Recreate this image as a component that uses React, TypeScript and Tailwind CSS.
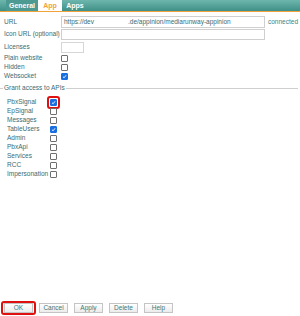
import React from 'react';

const font = { fontFamily: '"Liberation Sans", Arial, sans-serif' };

const Check: React.FC<{ checked?: boolean; marked?: boolean }> = ({ checked, marked }) => (
  <span className="relative inline-flex">
    <span
      className={
        checked
          ? 'w-[7px] h-[7px] rounded-[1px] bg-[#1a6fe0] border border-[#1a6fe0] flex items-center justify-center'
          : 'w-[7px] h-[7px] rounded-[1px] bg-white border border-[#6f6f6f]'
      }
    >
      {checked && (
        <svg width="5" height="5" viewBox="0 0 10 10">
          <path d="M2 5.5 L4.2 7.5 L8.2 2.5" stroke="white" strokeWidth="1.8" fill="none" />
        </svg>
      )}
    </span>
    {marked && <span className="absolute -inset-[3px] border-2 border-[#e01010] rounded-[3px]" />}
  </span>
);

const apis: { name: string; checked: boolean; marked?: boolean }[] = [
  { name: 'PbxSignal', checked: true, marked: true },
  { name: 'EpSignal', checked: false },
  { name: 'Messages', checked: false },
  { name: 'TableUsers', checked: true },
  { name: 'Admin', checked: false },
  { name: 'PbxApi', checked: false },
  { name: 'Services', checked: false },
  { name: 'RCC', checked: false },
  { name: 'Impersonation', checked: false },
];

const buttons = ['OK', 'Cancel', 'Apply', 'Delete', 'Help'];

export default function App() {
  return (
    <div className="w-[300px] h-[316px] bg-white flex flex-col text-[6.5px] leading-none text-[#3b6b70]" style={font}>
      {/* tabs */}
      <div className="h-[12px] flex items-end bg-gradient-to-b from-[#6db6ad] to-[#3e9088] border-b border-[#f2a23a] pl-[6px] text-[7px]">
        <div className="h-[11px] w-[32px] flex items-center justify-center font-bold text-white bg-[#4c9a91]">General</div>
        <div className="h-[11px] w-[24px] flex items-center justify-center font-bold text-[#f2a23a] bg-white">App</div>
        <div className="h-[11px] w-[26px] flex items-center justify-center font-bold text-white">Apps</div>
      </div>

      {/* main fields */}
      <div className="flex items-center h-[12px] mt-[4px]">
        <span className="w-[61px] pl-[4px]">URL</span>
        <div className="w-[204px] h-[12px] border border-[#cfcfcf] flex items-center pl-[2px] text-[#3b6b70]">
          <span>https://dev</span>
          <span className="ml-[34px]">.de/appinion/mediarunway-appinion</span>
        </div>
        <span className="ml-[3px] text-[#3a8585]">connected</span>
      </div>
      <div className="flex items-center h-[11px] mt-[1px]">
        <span className="w-[61px] pl-[4px]">Icon URL (optional)</span>
        <div className="w-[204px] h-[11px] border border-[#cfcfcf]" />
      </div>
      <div className="flex items-center h-[11px] mt-[2px]">
        <span className="w-[61px] pl-[4px]">Licenses</span>
        <div className="w-[23px] h-[11px] border border-[#d6d6d6]" />
      </div>
      <div className="flex items-center h-[9px] mt-[1px]">
        <span className="w-[61px] pl-[4px]">Plain website</span>
        <Check />
      </div>
      <div className="flex items-center h-[9px]">
        <span className="w-[61px] pl-[4px]">Hidden</span>
        <Check />
      </div>
      <div className="flex items-center h-[9px]">
        <span className="w-[61px] pl-[4px]">Websocket</span>
        <Check checked />
      </div>

      {/* fieldset */}
      <div className="flex items-center mt-[4px] h-[7px] pr-[2px]">
        <span className="w-[3px] h-px bg-[#cfcfcf]" />
        <span className="px-[1px]">Grant access to APIs</span>
        <span className="flex-1 h-px bg-[#cfcfcf]" />
      </div>
      <div className="flex flex-col mt-[6px]">
        {apis.map((a) => (
          <div key={a.name} className="flex items-center h-[9px]">
            <span className="w-[50px] pl-[7px]">{a.name}</span>
            <Check checked={a.checked} marked={a.marked} />
          </div>
        ))}
      </div>

      {/* buttons */}
      <div className="mt-auto mb-[3px] flex items-center pl-[4px] gap-[6px]">
        {buttons.map((b) => (
          <div key={b} className="relative">
            <div className="w-[29px] h-[10px] border border-[#c4c4c4] bg-gradient-to-b from-white to-[#ececec] flex items-center justify-center text-[#3a7a7a]">
              {b}
            </div>
            {b === 'OK' && <span className="absolute -inset-x-[3px] -inset-y-[2px] border-2 border-[#e01010] rounded-[3px]" />}
          </div>
        ))}
      </div>
    </div>
  );
}
